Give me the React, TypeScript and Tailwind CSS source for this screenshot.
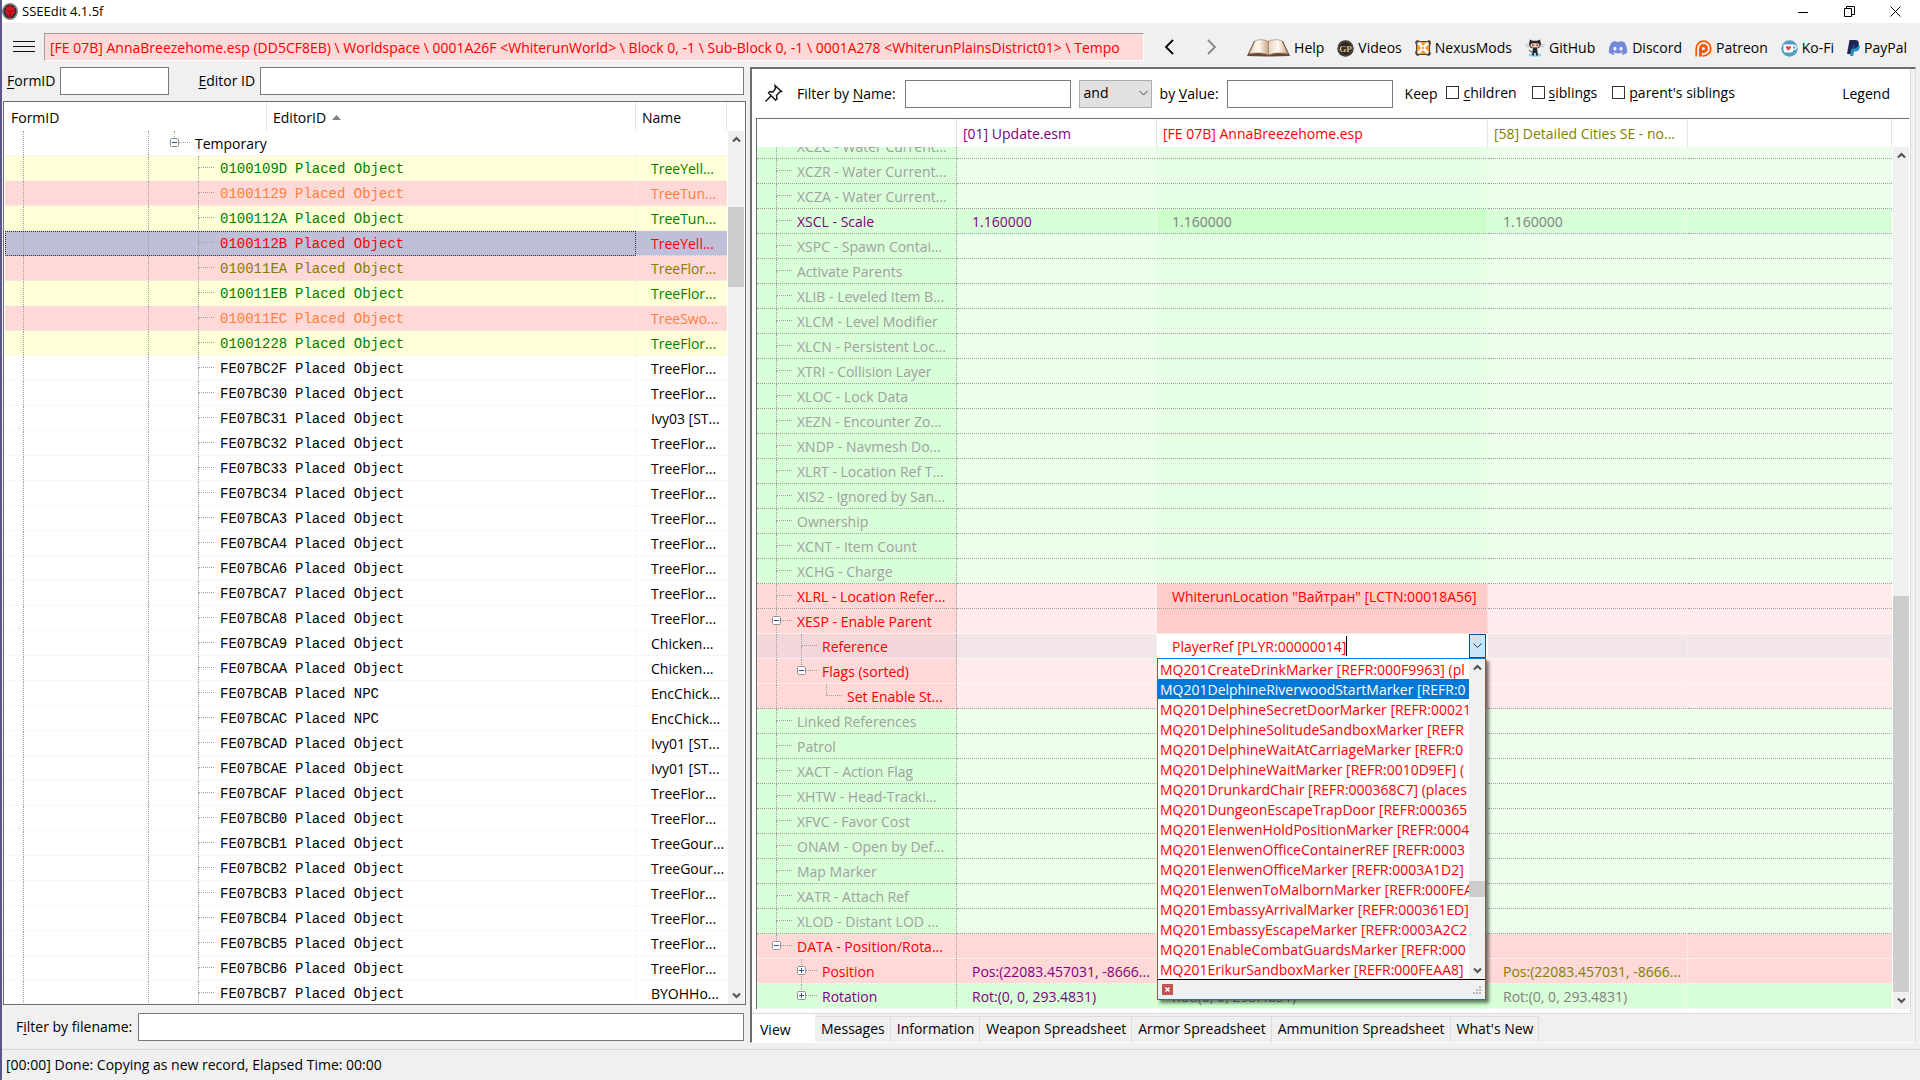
import React from 'react';
import { FaDiscord } from 'react-icons/fa';

type TreeRow = { id: string; kind?: string; name: string; tone?: string };

const treeRows: TreeRow[] = [
  { id: '0100109D', name: 'TreeYell...', tone: 'bg-[#ffffd8] text-[#008000]' },
  { id: '01001129', name: 'TreeTun...', tone: 'bg-[#ffd8d8] text-[#ff8040]' },
  { id: '0100112A', name: 'TreeTun...', tone: 'bg-[#ffffd8] text-[#008000]' },
  { id: '0100112B', name: 'TreeYell...', tone: 'bg-[#bfbfd9] text-[#ff0000]' },
  { id: '010011EA', name: 'TreeFlor...', tone: 'bg-[#ffd8d8] text-[#808000]' },
  { id: '010011EB', name: 'TreeFlor...', tone: 'bg-[#ffffd8] text-[#008000]' },
  { id: '010011EC', name: 'TreeSwo...', tone: 'bg-[#ffd8d8] text-[#ff8040]' },
  { id: '01001228', name: 'TreeFlor...', tone: 'bg-[#ffffd8] text-[#008000]' },
  { id: 'FE07BC2F', name: 'TreeFlor...' },
  { id: 'FE07BC30', name: 'TreeFlor...' },
  { id: 'FE07BC31', name: 'Ivy03 [ST...' },
  { id: 'FE07BC32', name: 'TreeFlor...' },
  { id: 'FE07BC33', name: 'TreeFlor...' },
  { id: 'FE07BC34', name: 'TreeFlor...' },
  { id: 'FE07BCA3', name: 'TreeFlor...' },
  { id: 'FE07BCA4', name: 'TreeFlor...' },
  { id: 'FE07BCA6', name: 'TreeFlor...' },
  { id: 'FE07BCA7', name: 'TreeFlor...' },
  { id: 'FE07BCA8', name: 'TreeFlor...' },
  { id: 'FE07BCA9', name: 'Chicken...' },
  { id: 'FE07BCAA', name: 'Chicken...' },
  { id: 'FE07BCAB', kind: 'Placed NPC', name: 'EncChick...' },
  { id: 'FE07BCAC', kind: 'Placed NPC', name: 'EncChick...' },
  { id: 'FE07BCAD', name: 'Ivy01 [ST...' },
  { id: 'FE07BCAE', name: 'Ivy01 [ST...' },
  { id: 'FE07BCAF', name: 'TreeFlor...' },
  { id: 'FE07BCB0', name: 'TreeFlor...' },
  { id: 'FE07BCB1', name: 'TreeGour...' },
  { id: 'FE07BCB2', name: 'TreeGour...' },
  { id: 'FE07BCB3', name: 'TreeFlor...' },
  { id: 'FE07BCB4', name: 'TreeFlor...' },
  { id: 'FE07BCB5', name: 'TreeFlor...' },
  { id: 'FE07BCB6', name: 'TreeFlor...' },
  { id: 'FE07BCB7', name: 'BYOHHo...' },
];

// background per column: label, 1st plugin, 2nd plugin, 3rd plugin and the rest
const palettes = {
  green: ['bg-[#d8ffd8]', 'bg-[#ebffeb]', 'bg-[#e5ffe5]', 'bg-[#ebffeb]'],
  greenFull: ['bg-[#d8ffd8]', 'bg-[#d8ffd8]', 'bg-[#ccffcc]', 'bg-[#d8ffd8]'],
  red: ['bg-[#ffd8d8]', 'bg-[#ffebeb]', 'bg-[#ffcccc]', 'bg-[#ffebeb]'],
  redFull: ['bg-[#ffd8d8]', 'bg-[#ffd8d8]', 'bg-[#ffcccc]', 'bg-[#ffd8d8]'],
  focus: ['bg-[#f2d6d9]', 'bg-[#f2e6e8]', 'bg-white', 'bg-[#f2e6e8]'],
};

type Field = {
  label: string;
  level?: number;
  palette?: keyof typeof palettes;
  color?: string;
  toggle?: 'plus' | 'minus';
  trunk?: boolean; // main line continues through nested rows
  last?: boolean;
  soft?: boolean; // white separator below
  values?: [string, string, string];
  editor?: boolean;
};

const fields: Field[] = [
  { label: 'XCZC - Water Current...' },
  { label: 'XCZR - Water Current...' },
  { label: 'XCZA - Water Current...' },
  { label: 'XSCL - Scale', palette: 'greenFull', color: 'text-[#800080]', values: ['1.160000', '1.160000', '1.160000'] },
  { label: 'XSPC - Spawn Contai...' },
  { label: 'Activate Parents' },
  { label: 'XLIB - Leveled Item B...' },
  { label: 'XLCM - Level Modifier' },
  { label: 'XLCN - Persistent Loc...' },
  { label: 'XTRI - Collision Layer' },
  { label: 'XLOC - Lock Data' },
  { label: 'XEZN - Encounter Zo...' },
  { label: 'XNDP - Navmesh Do...' },
  { label: 'XLRT - Location Ref T...' },
  { label: 'XIS2 - Ignored by San...' },
  { label: 'Ownership' },
  { label: 'XCNT - Item Count' },
  { label: 'XCHG - Charge' },
  { label: 'XLRL - Location Refer...', palette: 'red', color: 'text-[#ff0000]', values: ['', 'WhiterunLocation "Вайтран" [LCTN:00018A56]', ''] },
  { label: 'XESP - Enable Parent', palette: 'red', color: 'text-[#ff0000]', toggle: 'minus', soft: true },
  { label: 'Reference', level: 1, trunk: true, palette: 'focus', color: 'text-[#ff0000]', soft: true, editor: true },
  { label: 'Flags (sorted)', level: 1, trunk: true, palette: 'red', color: 'text-[#ff0000]', toggle: 'minus', last: true, soft: true },
  { label: 'Set Enable St...', level: 2, trunk: true, palette: 'red', color: 'text-[#ff0000]', last: true },
  { label: 'Linked References' },
  { label: 'Patrol' },
  { label: 'XACT - Action Flag' },
  { label: 'XHTW - Head-Tracki...' },
  { label: 'XFVC - Favor Cost' },
  { label: 'ONAM - Open by Def...' },
  { label: 'Map Marker' },
  { label: 'XATR - Attach Ref' },
  { label: 'XLOD - Distant LOD ...' },
  { label: 'DATA - Position/Rota...', palette: 'redFull', color: 'text-[#ff0000]', toggle: 'minus', last: true, soft: true },
  { label: 'Position', level: 1, palette: 'redFull', color: 'text-[#ff0000]', toggle: 'plus', soft: true, values: ['Pos:(22083.457031, -8666...', '', 'Pos:(22083.457031, -8666...'] },
  { label: 'Rotation', level: 1, palette: 'greenFull', color: 'text-[#800080]', toggle: 'plus', last: true, soft: true, values: ['Rot:(0, 0, 293.4831)', 'Rot:(0, 0, 293.4831)', 'Rot:(0, 0, 293.4831)'] },
];

const references = [
  'MQ201CreateDrinkMarker [REFR:000F9963] (pl',
  'MQ201DelphineRiverwoodStartMarker [REFR:0',
  'MQ201DelphineSecretDoorMarker [REFR:00021',
  'MQ201DelphineSolitudeSandboxMarker [REFR',
  'MQ201DelphineWaitAtCarriageMarker [REFR:0',
  'MQ201DelphineWaitMarker [REFR:0010D9EF] (',
  'MQ201DrunkardChair [REFR:000368C7] (places',
  'MQ201DungeonEscapeTrapDoor [REFR:000365',
  'MQ201ElenwenHoldPositionMarker [REFR:0004',
  'MQ201ElenwenOfficeContainerREF [REFR:0003',
  'MQ201ElenwenOfficeMarker [REFR:0003A1D2]',
  'MQ201ElenwenToMalbornMarker [REFR:000FEA',
  'MQ201EmbassyArrivalMarker [REFR:000361ED]',
  'MQ201EmbassyEscapeMarker [REFR:0003A2C2',
  'MQ201EnableCombatGuardsMarker [REFR:000',
  'MQ201ErikurSandboxMarker [REFR:000FEAA8]',
];

const tabs = ['Messages', 'Information', 'Weapon Spreadsheet', 'Armor Spreadsheet', 'Ammunition Spreadsheet', "What's New"];

const Chevron: React.FC<{ dir: 'up' | 'down' }> = ({ dir }) => (
  <svg width="9" height="7" viewBox="0 0 9 7" fill="none" stroke="#505050" strokeWidth="2">
    <path d={dir === 'up' ? 'M1 5.5 4.5 2 8 5.5' : 'M1 1.5 4.5 5 8 1.5'} />
  </svg>
);

const ScrollBar: React.FC<{ before: string; thumb: string }> = ({ before, thumb }) => (
  <div className="flex min-h-0 w-4 flex-1 flex-col bg-[#f0f0f0]">
    <button aria-label="Scroll up" className="flex h-[17px] shrink-0 items-center justify-center"><Chevron dir="up" /></button>
    <div className="flex min-h-0 flex-1 flex-col">
      <div className={before} />
      <div className={`bg-[#cdcdcd] ${thumb}`} />
    </div>
    <button aria-label="Scroll down" className="flex h-[17px] shrink-0 items-center justify-center"><Chevron dir="down" /></button>
  </div>
);

const Toggle: React.FC<{ kind: 'plus' | 'minus' }> = ({ kind }) => (
  <button aria-label={kind === 'plus' ? 'Expand' : 'Collapse'} className="absolute top-[7px] -left-1 h-[9px] w-[9px] rounded-[1px] bg-white">
    <svg width="9" height="9" viewBox="0 0 9 9" fill="none">
      <rect x="0.5" y="0.5" width="8" height="8" rx="1" stroke="#919191" />
      <path d={kind === 'plus' ? 'M2 4.5h5M4.5 2v5' : 'M2 4.5h5'} stroke="#334f99" />
    </svg>
  </button>
);

// one tree connector: vertical line plus a tick towards the caption
const Branch: React.FC<{ last?: boolean; toggle?: 'plus' | 'minus' }> = ({ last, toggle }) => (
  <span className="relative block h-6 w-4 shrink-0">
    <span className="block h-3 w-4 border-b border-l border-dotted border-[#a0a0a0]" />
    {!last && <span className="block h-3 w-4 border-l border-dotted border-[#a0a0a0]" />}
    {toggle && <Toggle kind={toggle} />}
  </span>
);

const Accel: React.FC<{ text: string; accel: string }> = ({ text, accel }) => {
  const at = text.indexOf(accel);
  return <>{text.slice(0, at)}<u className="underline-offset-2">{accel}</u>{text.slice(at + 1)}</>;
};

const Check: React.FC<{ text: string; accel: string }> = ({ text, accel }) => (
  <label className="flex items-center gap-1">
    <input type="checkbox" className="h-[13px] w-[13px] appearance-none border border-[#333] bg-white" />
    <span><Accel text={text} accel={accel} /></span>
  </label>
);

const BookIcon = () => (
  <svg width="43" height="18" viewBox="0 0 43 18">
    <defs>
      <linearGradient id="page" x1="0" x2="1">
        <stop offset="0" stopColor="#e9d3bd" />
        <stop offset=".5" stopColor="#fffaf2" />
        <stop offset="1" stopColor="#c9a588" />
      </linearGradient>
    </defs>
    <path d="M0 17 7 2h29l7 15-20 .5h-3z" fill="#6b4630" />
    <path d="M2 15 8 2c4-2 10-1.500 13.500.5V16C15 13.500 8 13.500 2 15z" fill="url(#page)" stroke="#8f7259" strokeWidth=".6" />
    <path d="M41 15 35 2c-4-2-10-1.500-13.500.5V16C28 13.500 35 13.500 41 15z" fill="url(#page)" stroke="#8f7259" strokeWidth=".6" />
  </svg>
);

const GamerPoetsIcon = () => (
  <svg width="17" height="17" viewBox="0 0 17 17">
    <circle cx="8.500" cy="8.500" r="8.200" fill="#2b2826" />
    <circle cx="8.500" cy="8.500" r="7" fill="none" stroke="#5d5348" />
    <text x="8.500" y="12" textAnchor="middle" fontSize="9" fontWeight="700" fontFamily="Liberation Serif, serif" fill="#d9c08a">GP</text>
  </svg>
);

const NexusIcon = () => (
  <svg width="16" height="16" viewBox="0 0 16 16">
    <path d="M2 0l3 1h7l3-1 1 3-1 3v5l1 3-2 2-3-1H5l-3 1-2-3 1-3V5L0 2z" fill="#4d4238" />
    <rect x="2" y="2" width="12" height="12" rx="2" fill="#f8982c" />
    <path d="M2 3l3-1 3 4 4-4 2 2-4 4 4 4-2 2-4-4-4 4-2-2 4-4z" fill="#fff" />
    <path d="M8 6.500l1.500 1.500L8 9.500 6.500 8z" fill="#f8982c" />
  </svg>
);

const OctocatIcon = () => (
  <svg width="20" height="18" viewBox="0 0 20 18">
    <ellipse cx="10" cy="16" rx="6.500" ry="1.800" fill="#8fd0ee" />
    <path d="M5 .5l2.500 1.200h5L15 .5l.9 4c0 4-2 5-5.900 5s-5.900-1-5.900-5z" fill="#25292e" />
    <rect x="5.500" y="4.300" width="9" height="4.300" rx="2" fill="#f4cbb2" />
    <circle cx="7.800" cy="6.300" r="1" fill="#8c4a41" />
    <circle cx="12.200" cy="6.300" r="1" fill="#8c4a41" />
    <path d="M8 9h4l1 7.500h-2V14H9v2.500H7z" fill="#25292e" />
    <path d="M7.500 13c-2 .3-2-1.500-3.500-1.500" stroke="#25292e" fill="none" />
    <path d="M.5 5.500h3.500M1 8l3-.8M19.500 5.500H16M19 8l-3-.8" stroke="#a9a9a9" strokeWidth=".7" />
  </svg>
);

const PatreonIcon = () => (
  <svg width="17" height="17" viewBox="0 0 17 17" fill="none" stroke="#ff5900">
    <path d="M1.200 16.500V8.500a7.300 7.300 0 1 1 7.300 7.300H7.500" strokeWidth="1.800" />
    <path d="M5.500 16.500V8.500a3 3 0 1 1 3 3H7" strokeWidth="3" />
  </svg>
);

const KofiIcon = () => (
  <svg width="17" height="17" viewBox="0 0 17 17">
    <circle cx="8.500" cy="8.500" r="8.200" fill="#4f9fc0" />
    <path d="M2.500 4.500h9.700V10a2.500 2.500 0 0 1-2.500 2.500H5A2.500 2.500 0 0 1 2.500 10z" fill="#fff" />
    <path d="M12 5.500h1.200a1.700 1.700 0 0 1 0 3.800H12" stroke="#fff" fill="none" strokeWidth="1.300" />
    <path d="M7.400 10.800 5 8.300a1.400 1.400 0 0 1 2.400-1.500 1.400 1.400 0 0 1 2.400 1.500z" fill="#f0424e" />
  </svg>
);

const PayPalIcon = () => (
  <svg width="13" height="16" viewBox="0 0 13 16">
    <path d="M4.500 4H11c1.700.8 2 2.400 1.600 4-.6 2.600-2.300 3.500-4.600 3.500H7L6.200 16H3z" fill="#2790c3" />
    <path d="M2.500 0H8c3 0 4.300 1.500 3.700 4.200C11 7.300 9 8.500 6.300 8.500H4.500L3.500 14H0z" fill="#1f264f" />
    <path d="M4.800 5H8v3.300l-3.500.2z" fill="#1f3a80" />
  </svg>
);

const links = [
  { text: 'Help', icon: <BookIcon /> },
  { text: 'Videos', icon: <GamerPoetsIcon /> },
  { text: 'NexusMods', icon: <NexusIcon /> },
  { text: 'GitHub', icon: <OctocatIcon /> },
  { text: 'Discord', icon: <FaDiscord size={20} color="#7289da" /> },
  { text: 'Patreon', icon: <PatreonIcon /> },
  { text: 'Ko-Fi', icon: <KofiIcon /> },
  { text: 'PayPal', icon: <PayPalIcon /> },
];

const TitleBar = () => (
  <header className="flex h-[23px] shrink-0 items-center bg-white pr-[19px]">
    <svg width="16" height="17" viewBox="0 0 16 17">
      <ellipse cx="8" cy="8.500" rx="7.300" ry="7.800" fill="#2f3133" stroke="#8c9090" strokeWidth="1.500" />
      <path d="M8 1.500l2 3 2.500-1-.5 3.500 1 2-2.500 3L8 15.500 5.500 12 3 9l1-2-.5-3.500 2.500 1z" fill="#e0101f" />
      <path d="M6 7.500l1 1.500M10 7.500 9 9M8 10.500v3" stroke="#4a0508" />
    </svg>
    <h1 className="ml-1 flex-1 text-[13px]">SSEEdit 4.1.5f</h1>
    <div className="flex items-center gap-[35px]">
      <button aria-label="Minimize"><svg width="11" height="11" fill="none" stroke="#000"><path d="M0 6.500h10" /></svg></button>
      <button aria-label="Restore"><svg width="11" height="11" fill="none" stroke="#000"><path d="M.5 2.500h7v8h-7zM2.500 2V.5h8v8H8" /></svg></button>
      <button aria-label="Close"><svg width="11" height="11" fill="none" stroke="#000"><path d="M.5.5l10 10M10.500.5l-10 10" /></svg></button>
    </div>
  </header>
);

const ToolBar = () => (
  <div className="flex h-[38px] shrink-0 items-center pt-2.5 pr-[13px] pl-[11px]">
    <button aria-label="Menu" className="mr-[9px]">
      <svg width="22" height="12" stroke="#111"><path d="M0 .5h22M0 5.500h22M0 10.500h22" /></svg>
    </button>
    <input
      readOnly
      aria-label="Path"
      className="h-7 min-w-0 flex-1 border border-t-[#a0a0a0] border-r-white border-b-white border-l-[#a0a0a0] bg-[#ffd8d8] pl-[5px] text-[#ff0000] outline-none"
      value="[FE 07B] AnnaBreezehome.esp (DD5CF8EB) \ Worldspace \ 0001A26F <WhiterunWorld> \ Block 0, -1 \ Sub-Block 0, -1 \ 0001A278 <WhiterunPlainsDistrict01> \ Tempo"
    />
    <button aria-label="Back" className="ml-5"><svg width="10" height="16" fill="none" stroke="#000" strokeWidth="1.800"><path d="M9 1 2 8l7 7" /></svg></button>
    <button aria-label="Forward" className="mr-[30px] ml-[33px]"><svg width="10" height="16" fill="none" stroke="#888" strokeWidth="1.800"><path d="M1 1l7 7-7 7" /></svg></button>
    <nav className="flex items-center gap-[13px] pt-0.5">
      {links.map((l) => (
        <a key={l.text} href="#" className="flex items-center gap-1">{l.icon}{l.text}</a>
      ))}
    </nav>
  </div>
);

const RecordTree = () => (
  <div className="mt-1.5 flex min-h-0 flex-1 border border-[#6e6e6e] bg-white pl-px">
    <div className="min-w-0 flex-1 overflow-hidden">
      <table className="w-full table-fixed border-separate border-spacing-0">
        <colgroup>
          <col className="w-[262px]" />
          <col />
          <col className="w-[91px]" />
        </colgroup>
        <thead>
          <tr className="h-[29px] text-left">
            <th className="border-r border-[#e5e5e5] p-0 pt-0.5 pl-1.5 font-normal">FormID</th>
            <th className="border-r border-[#e5e5e5] p-0 pt-0.5 pl-1.5 font-normal">
              <span className="flex items-center gap-1.5">EditorID
                <svg width="9" height="5"><path d="M4.500 0 9 5H0z" fill="#808080" /></svg>
              </span>
            </th>
            <th className="border-r border-[#e5e5e5] p-0 pt-0.5 pl-1.5 font-normal">Name</th>
          </tr>
        </thead>
        <tbody>
          <tr>
            <td colSpan={2} className="border-b border-dotted border-[#e8e8e8] p-0">
              <div className="flex h-6 items-center pl-[18px]">
                <span className="h-6 w-[125px] border-l border-dotted border-[#a0a0a0]" />
                <span className="h-6 w-[26px] border-l border-dotted border-[#a0a0a0]" />
                <Branch last toggle="minus" />
                <span className="ml-[5px] pt-0.5">Temporary</span>
              </div>
            </td>
            <td className="border-b border-dotted border-[#e8e8e8] p-0" />
          </tr>
          {treeRows.map((r) => {
            const picked = r.id === '0100112B';
            return (
              <tr key={r.id} className={r.tone}>
                <td colSpan={2} className={`border-r border-b border-dotted p-0 ${picked ? 'border-[#333] outline-1 -outline-offset-1 outline-dotted outline-[#333]' : 'border-[#efefef]'}`}>
                  <div className="flex h-6 items-center pl-[18px]">
                    <span className="h-6 w-[125px] border-l border-dotted border-[#a0a0a0]" />
                    <span className="h-6 w-[50px] border-l border-dotted border-[#a0a0a0]" />
                    <Branch />
                    <span className="ml-1.5 w-[75px] pt-0.5 font-['Liberation_Mono',monospace]">{r.id}</span>
                    <span className="pt-0.5 font-['Liberation_Mono',monospace]">{r.kind ?? 'Placed Object'}</span>
                  </div>
                </td>
                <td className="overflow-hidden border-b border-dotted border-[#efefef] p-0 pl-[15px] whitespace-nowrap">
                  <div className="h-6 leading-[26px]">{r.name}</div>
                </td>
              </tr>
            );
          })}
        </tbody>
      </table>
    </div>
    <div className="flex w-[18px] flex-col pt-[29px] pl-px"><ScrollBar before="h-[59px]" thumb="h-20" /></div>
  </div>
);

const ReferenceEditor = () => (
  <div className="relative flex h-6 items-center bg-white pl-[15px]">
    <input aria-label="Reference" className="field-sizing-content bg-transparent pt-0.5 text-[#ff0000] outline-none" defaultValue="PlayerRef [PLYR:00000014]" />
    <span className="h-5 w-px bg-black" />
    <span className="flex-1" />
    <button aria-label="Open list" className="mr-px flex h-6 w-[17px] items-center justify-center border border-[#005499] bg-[#cce4f7]">
      <svg width="9" height="6" fill="none" stroke="#333"><path d="M.5.5l4 4 4-4" /></svg>
    </button>
    <div className="absolute top-full left-0 z-10 w-[329px] border border-[#0078d7] bg-white shadow-[3px_3px_3px_rgba(0,0,0,0.5)]">
      <div className="flex border-b border-black">
        <ul role="listbox" aria-label="References" className="min-w-0 flex-1">
          {references.map((r, i) => (
            <li
              key={r}
              role="option"
              aria-selected={i === 1}
              className={`h-5 overflow-hidden pl-0.5 leading-[22px] whitespace-nowrap ${i === 1 ? 'bg-[#0078d7] text-white' : 'text-[#ff0000]'}`}
            >
              {r}
            </li>
          ))}
        </ul>
        <div className="flex flex-col"><ScrollBar before="h-[205px]" thumb="h-4" /></div>
      </div>
      <div className="flex h-[19px] items-center justify-between bg-[#f0f0f0] px-1">
        <button aria-label="Close list">
          <svg width="11" height="11"><path d="M0 0h11v11H0z" fill="#c75050" /><path d="M3.500 3.500l4 4M7.500 3.500l-4 4" stroke="#fff" strokeWidth="1.500" /></svg>
        </button>
        <svg width="8" height="8" fill="#bbb"><path d="M6 0h2v2H6zM3 3h2v2H3zM6 3h2v2H6zM0 6h2v2H0zM3 6h2v2H3zM6 6h2v2H6z" /></svg>
      </div>
    </div>
  </div>
);

const FieldRow: React.FC<{ field: Field; cut: boolean }> = ({ field, cut }) => {
  const bg = palettes[field.palette ?? 'green'];
  const line = field.soft ? 'border-b-white' : 'border-b-[#a0a0a0]';
  const level = field.level ?? 0;
  const values = field.values ?? ['', '', ''];
  const conflict = field.label === 'Position';
  const colors = [
    'text-[#800080]',
    field.palette === 'red' ? 'text-[#ff0000]' : 'text-[#808080]',
    conflict ? 'text-[#808000]' : 'text-[#808080]',
  ];

  return (
    <tr>
      <td className={`border-r border-b border-dotted border-r-[#a0a0a0] p-0 ${bg[0]} ${line}`}>
        <div className={`flex items-end overflow-hidden pl-[19px] ${cut ? 'h-[11px]' : 'h-6'}`}>
          {level > 0 && <span className={`h-6 w-[25px] shrink-0 ${field.trunk ? 'border-l border-dotted border-[#a0a0a0]' : ''}`} />}
          {level > 1 && <span className="h-6 w-[25px] shrink-0" />}
          <Branch last={field.last} toggle={field.toggle} />
          <span className={`ml-[5px] h-6 leading-[26px] whitespace-nowrap ${field.color ?? 'text-[#a0a0a0]'}`}>{field.label}</span>
        </div>
      </td>
      {values.map((v, i) => (
        <td key={i} className={`border-r border-b border-dotted border-r-[#f4f4f4] p-0 ${bg[i + 1]} ${line}`}>
          {field.editor && i === 1 ? <ReferenceEditor /> : (
            <div className={`overflow-hidden pl-[15px] leading-[26px] whitespace-nowrap ${cut ? 'h-[11px]' : 'h-6'} ${colors[i]}`}>{v}</div>
          )}
        </td>
      ))}
      <td className={`border-b border-dotted p-0 ${bg[3]} ${line}`} />
    </tr>
  );
};

const FieldGrid = () => (
  <div className="mr-px ml-1 flex border-t border-l border-[#6e6e6e]">
    <table className="min-w-0 flex-1 table-fixed border-separate border-spacing-0">
      <colgroup>
        <col className="w-[200px]" />
        <col className="w-[200px]" />
        <col className="w-[331px]" />
        <col className="w-[200px]" />
        <col />
      </colgroup>
      <thead>
        <tr className="h-7 text-left">
          <th className="border-r border-[#e5e5e5] p-0"><span className="sr-only">Field</span></th>
          <th className="border-r border-[#e5e5e5] p-0 pt-0.5 pl-1.5 font-normal text-[#800080]">[01] Update.esm</th>
          <th className="border-r border-[#e5e5e5] p-0 pt-0.5 pl-1.5 font-normal text-[#ff0000]">[FE 07B] AnnaBreezehome.esp</th>
          <th className="border-r border-[#e5e5e5] p-0 pt-0.5 pl-1.5 font-normal whitespace-nowrap text-[#808000]">[58] Detailed Cities SE - no...</th>
          <th className="border-r border-[#e5e5e5] p-0" />
        </tr>
      </thead>
      <tbody>
        {fields.map((f, i) => <FieldRow key={f.label} field={f} cut={i === 0} />)}
      </tbody>
    </table>
    <div className="ml-px flex flex-col pt-7"><ScrollBar before="h-[432px]" thumb="flex-1" /></div>
  </div>
);

const FilterBar = () => (
  <div className="flex h-[49px] items-center pr-5 pl-3">
    <button aria-label="Pin" className="mr-3.5">
      <svg width="19" height="19" viewBox="0 0 19 19" fill="none" stroke="#111" strokeWidth="1.400">
        <path d="M11 1.500l6.500 6-2 .5-3 3.500.5 3.500-1.500 1-7-7L6 7.500l3 .5 2.500-3.500zM7 12l-5.500 5.500" />
      </svg>
    </button>
    <label htmlFor="filter-name" className="mr-[9px] whitespace-nowrap"><Accel text="Filter by Name:" accel="N" /></label>
    <input id="filter-name" className="mr-2 h-7 w-[166px] border border-[#7a7a7a] bg-white px-1" />
    <div className="relative mr-2">
      <select aria-label="Operator" className="block h-7 w-[73px] appearance-none border border-[#adadad] bg-[#e1e1e1] pb-0.5 pl-1" defaultValue="and">
        <option>and</option>
        <option>or</option>
      </select>
      <svg className="pointer-events-none absolute top-2.5 right-1" width="9" height="7" fill="none" stroke="#444"><path d="M.5 1l4 4 4-4" /></svg>
    </div>
    <label htmlFor="filter-value" className="mr-2 whitespace-nowrap"><Accel text="by Value:" accel="V" /></label>
    <input id="filter-value" className="mr-3 h-7 w-[166px] border border-[#7a7a7a] bg-white px-1" />
    <span className="mr-[9px]">Keep</span>
    <div className="flex flex-1 items-center gap-[15px] pb-0.5 whitespace-nowrap">
      <Check text="children" accel="c" />
      <Check text="siblings" accel="s" />
      <Check text="parent's siblings" accel="p" />
    </div>
    <button>Legend</button>
  </div>
);

const App: React.FC = () => {
  return (
    <div className="flex h-screen flex-col overflow-hidden border-l-2 border-[#5b5688] bg-[#f0f0f0] font-['Open_Sans','Noto_Sans',sans-serif] text-sm text-black">
      <TitleBar />
      <ToolBar />
      <main className="flex min-h-0 flex-1 pt-1.5">
        <section className="mr-1 flex w-[744px] shrink-0 flex-col pl-px">
          <div className="flex items-center pl-1">
            <label htmlFor="form-id" className="mr-[5px]"><Accel text="FormID" accel="F" /></label>
            <input id="form-id" className="h-7 w-[109px] border border-[#7a7a7a] bg-white px-1" />
            <label htmlFor="editor-id" className="mr-[5px] ml-[29px]"><Accel text="Editor ID" accel="E" /></label>
            <input id="editor-id" className="mr-0.5 h-7 min-w-0 flex-1 border border-[#7a7a7a] bg-white px-1" />
          </div>
          <RecordTree />
          <div className="flex items-center py-2 pr-0.5 pl-[13px]">
            <label htmlFor="filter-file" className="mr-1.5"><Accel text="Filter by filename:" accel="i" /></label>
            <input id="filter-file" className="h-7 min-w-0 flex-1 border border-[#7a7a7a] bg-white px-1" />
          </div>
        </section>
        <section className="mr-1 mb-1.5 flex min-w-0 flex-1 flex-col border-t-2 border-r border-b border-l-2 border-t-[#6e6e6e] border-r-[#dcdcdc] border-b-white border-l-[#6e6e6e]">
          <div className="mr-1 min-h-0 flex-1 overflow-hidden border-r border-b border-[#dcdcdc] bg-white">
            <FilterBar />
            <FieldGrid />
          </div>
          <div role="tablist" className="flex h-7 shrink-0">
            <button role="tab" aria-selected="true" className="w-[63px] bg-white pt-1 pl-2 text-left">View</button>
            {tabs.map((t) => (
              <button key={t} role="tab" aria-selected="false" className="mt-0.5 border-t border-r border-[#dcdcdc] pr-[5px] pb-0.5 pl-1.5 whitespace-nowrap">{t}</button>
            ))}
          </div>
        </section>
      </main>
      <footer className="flex h-[31px] shrink-0 items-center border-t border-[#d7d7d7] pl-1">[00:00] Done: Copying as new record, Elapsed Time: 00:00</footer>
    </div>
  );
};

export default App;
